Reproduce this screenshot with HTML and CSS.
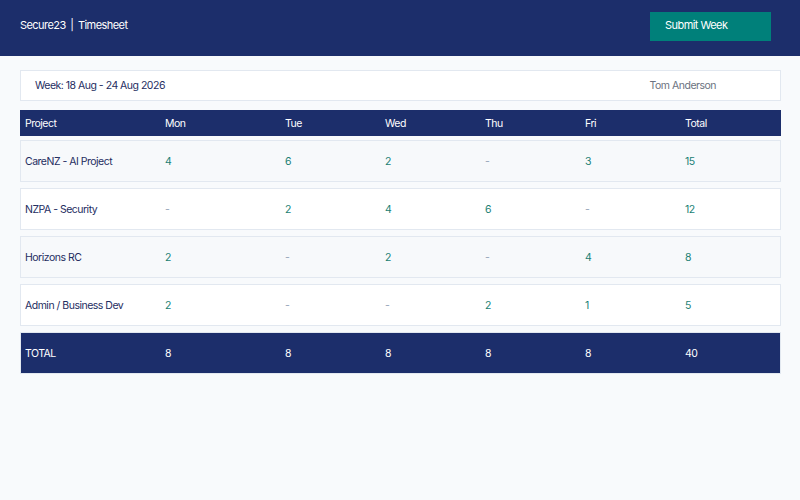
FILE: index.html
```html
<!DOCTYPE html>
<html lang="en">
<head>
    <meta charset="UTF-8">
    <meta name="viewport" content="width=device-width, initial-scale=1.0">
    <title>Secure23 | Timesheet</title>
    <link rel="stylesheet" href="styles.css">
</head>
<body class="app-body">
    <header class="topbar">
        <div class="brand">Secure23 <span class="brand-sep">|</span> Timesheet</div>
        <button class="submit-btn">Submit Week</button>
    </header>

    <main class="content">
        <div class="week-bar">
            <span class="week-label">Week: 18 Aug - 24 Aug 2026</span>
            <span class="user-name">Tom Anderson</span>
        </div>

        <div class="sheet">
            <div class="sheet-row sheet-head">
                <div>Project</div>
                <div>Mon</div>
                <div>Tue</div>
                <div>Wed</div>
                <div>Thu</div>
                <div>Fri</div>
                <div>Total</div>
            </div>

            <div class="sheet-rows">
                <div class="sheet-row entry alt">
                    <div class="project">CareNZ - AI Project</div>
                    <div class="hours">4</div>
                    <div class="hours">6</div>
                    <div class="hours">2</div>
                    <div class="empty">-</div>
                    <div class="hours">3</div>
                    <div class="hours">15</div>
                </div>
                <div class="sheet-row entry">
                    <div class="project">NZPA - Security</div>
                    <div class="empty">-</div>
                    <div class="hours">2</div>
                    <div class="hours">4</div>
                    <div class="hours">6</div>
                    <div class="empty">-</div>
                    <div class="hours">12</div>
                </div>
                <div class="sheet-row entry alt">
                    <div class="project">Horizons RC</div>
                    <div class="hours">2</div>
                    <div class="empty">-</div>
                    <div class="hours">2</div>
                    <div class="empty">-</div>
                    <div class="hours">4</div>
                    <div class="hours">8</div>
                </div>
                <div class="sheet-row entry">
                    <div class="project">Admin / Business Dev</div>
                    <div class="hours">2</div>
                    <div class="empty">-</div>
                    <div class="empty">-</div>
                    <div class="hours">2</div>
                    <div class="hours">1</div>
                    <div class="hours">5</div>
                </div>
                <div class="sheet-row totals">
                    <div>TOTAL</div>
                    <div>8</div>
                    <div>8</div>
                    <div>8</div>
                    <div>8</div>
                    <div>8</div>
                    <div>40</div>
                </div>
            </div>
        </div>
    </main>
</body>
</html>
```

FILE: styles.css
```css
.app-body {
    margin: 0;
    background-color: #f8fafc;
    font-family: Inter, "Noto Sans", sans-serif;
    font-size: 10.5px;
    letter-spacing: -0.5px;
    color: #1e2d5f;
}

.topbar {
    display: flex;
    justify-content: space-between;
    align-items: flex-start;
    height: 56px;
    box-sizing: border-box;
    padding: 12px 29px 15px 20px;
    background-color: #1c2e6b;
    color: #fff;
    font-size: 11px;
    letter-spacing: -0.55px;
}

.brand {
    padding-top: 6px;
}

.brand-sep {
    margin: 0 2px;
}

.submit-btn {
    display: flex;
    align-items: flex-start;
    width: 121px;
    height: 29px;
    padding: 6px 0 0 15px;
    border: none;
    background-color: #00807a;
    color: #fff;
    font-family: inherit;
    font-size: 11px;
    letter-spacing: -0.55px;
    cursor: pointer;
}

.content {
    padding: 14px 19px 0 20px;
}

.week-bar {
    display: flex;
    justify-content: space-between;
    align-items: center;
    height: 31px;
    box-sizing: border-box;
    padding: 0 64px 0 14px;
    background-color: #fff;
    border: 1px solid #e2e8f0;
}

.user-name {
    color: #6b7280;
}

.sheet {
    margin-top: 9px;
}

.sheet-row {
    display: grid;
    grid-template-columns: 140px 120px 100px 100px 100px 100px 1fr;
    align-items: center;
    box-sizing: border-box;
    border: 1px solid #e2e8f0;
}

.sheet-row > div {
    padding-left: 4px;
}

.sheet-head {
    height: 26px;
    background-color: #1c2e6b;
    border-color: #1c2e6b;
    color: #fff;
}

.sheet-rows {
    display: flex;
    flex-direction: column;
    gap: 6px;
    margin-top: 4px;
}

.entry {
    height: 42px;
    background-color: #fff;
}

.entry.alt {
    background-color: #f7f9fb;
}

.project {
    color: #1e2d5f;
}

.hours {
    color: #1a7f74;
}

.empty {
    color: #94a3b8;
}

.totals {
    height: 42px;
    background-color: #1c2e6b;
    color: #fff;
}
```
